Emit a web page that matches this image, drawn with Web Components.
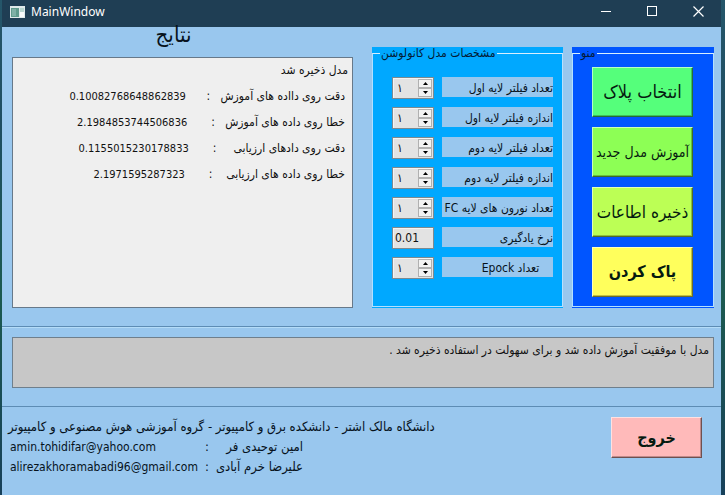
<!DOCTYPE html>
<html lang="fa">
<head>
<meta charset="utf-8">
<title>MainWindow</title>
<style>
html, body { height: 100%; }
body {
  margin: 0;
  font-family: "DejaVu Sans Condensed", "DejaVu Sans", sans-serif;
  font-size: 12px;
  line-height: 20px;
  color: #06121c;
  background: linear-gradient(180deg, #25566a 0, #1f4e62 25%, #1c5a50 60%, #17405a 100%);
}
</style>
</head>
<body>
<main-window></main-window>

<script>
const define = (name, html, setup) => {
  const template = document.createElement('template');
  template.innerHTML = html.trim();
  customElements.define(name, class extends HTMLElement {
    constructor() {
      super();
      this.attachShadow({ mode: 'open' }).append(template.content.cloneNode(true));
    }
    connectedCallback() {
      if (setup) setup(this, this.shadowRoot);
    }
  });
};

define('title-bar', `
<style>
:host { display: flex; align-items: center; height: 27px; padding: 0 8px; background: #1f3e54; color: #fff; direction: ltr; }
.app { width: 15px; height: 12px; margin-bottom: 4px; }
h1 { flex: 1; margin: 0 0 3px 6px; font: 12px/16px "Noto Sans", sans-serif; }
button { width: 46px; height: 22px; margin: 0 0 4px; padding: 0; border: 0; background: none; color: inherit; }
button:last-child { width: 30px; margin-left: 8px; }
button svg { display: block; margin: auto; }
</style>
<svg class="app" viewBox="0 0 15 12"><rect width="15" height="12" fill="#dfe9ea"/><rect x="1" y="2" width="8" height="9" fill="#5f9a8c"/><rect x="2" y="3" width="4" height="7" fill="#7fb0a6"/><rect x="10" y="2" width="4" height="9" fill="#b9d6d0"/><rect x="10" y="6" width="4" height="5" fill="#f7fafa"/></svg>
<h1><slot></slot></h1>
<button aria-label="Minimize"><svg width="11" height="11"><path d="M0 5.500h10" stroke="#fff"/></svg></button>
<button aria-label="Maximize"><svg width="11" height="11"><rect x=".5" y=".5" width="9" height="9" fill="none" stroke="#fff"/></svg></button>
<button aria-label="Close"><svg width="11" height="11"><path d="M.5 .5l10 10M10.500 .5l-10 10" stroke="#fff" stroke-width="1.200"/></svg></button>
`);

define('group-box', `
<style>
:host { display: block; background: var(--fill); border-bottom: 1px solid var(--fill); box-sizing: border-box; }
fieldset { box-sizing: border-box; height: 100%; margin: 0; padding: var(--top) var(--end) 8px var(--start); border: 1px solid #b4e0ff; border-top-color: #d8efff; min-width: 0; }
legend { margin-left: calc(7px - var(--start)); padding: 0 1px; line-height: 13px; color: #041a33; }
.items { display: grid; gap: 10px; }
</style>
<fieldset><legend></legend><div class="items"><slot></slot></div></fieldset>
`, (el, root) => { root.querySelector('legend').textContent = el.getAttribute('heading'); });

define('push-button', `
<style>
:host { display: block; }
button {
  display: block; box-sizing: border-box; width: 100%; height: var(--height, 50px); padding: 0;
  border: 1px solid; border-color: #ffffff90 #00000090 #00000090 #ffffff90;
  box-shadow: inset -1px -1px #00000040; background: var(--fill); color: #061a10;
  font: var(--weight, normal) var(--size, 17px)/24px "DejaVu Sans Condensed", "DejaVu Sans", sans-serif; white-space: nowrap;
}
</style>
<button type="button"><slot></slot></button>
`);

define('param-field', `
<style>
:host { display: flex; gap: 8px; height: 20px; }
.box { display: flex; box-sizing: border-box; flex: none; width: 42px; height: 22px; border: 1px solid #7d8a90; box-shadow: inset 1px 1px #f4f4f4; background: #e3e3e3; padding: 1px; }
input { flex: 1; min-width: 0; width: 0; padding: 0 1px; border: 0; background: none; font: 12px/18px "DejaVu Sans Condensed", "DejaVu Sans", sans-serif; color: #111; }
.spin input { padding-left: 3px; }
.steps { display: none; }
.spin .steps { display: grid; width: 14px; grid-template-rows: 1fr 1fr; }
.steps button { display: grid; place-items: center; padding: 0; border: 1px solid #b0b0b0; background: #f2f2f2; min-height: 0; }
label { flex: 1; min-width: 0; background: #99c7ee; direction: rtl; white-space: pre; line-height: 22px; color: #06121c; }
</style>
<div class="box"><input id="value" type="text"><span class="steps">
<button type="button" aria-label="Increase"><svg width="5" height="3"><path d="M0 3L2.500 0L5 3z"/></svg></button>
<button type="button" aria-label="Decrease"><svg width="5" height="3"><path d="M0 0L2.500 3L5 0z"/></svg></button>
</span></div><label for="value"><slot></slot></label>
`, (el, root) => {
  const input = root.querySelector('input');
  input.value = el.getAttribute('value');
  if (el.hasAttribute('spin')) {
    root.querySelector('.box').classList.add('spin');
    input.inputMode = 'numeric';
  }
});

define('results-panel', `
<style>
:host { display: flex; flex-direction: column; min-width: 0; }
h2 { margin: 0; height: 30px; padding-right: 18px; text-align: center; font-size: 22px; font-weight: normal; line-height: 16px; direction: rtl; }
.log { flex: 1; box-sizing: border-box; border: 1px solid #67798a; background: #efefef; padding: 0 4px; direction: rtl; line-height: 24px; color: #111; }
</style>
<h2>نتایج</h2>
<div class="log" role="log"><slot></slot></div>
`);

define('log-line', `
<style>
:host { display: block; height: 26px; white-space: pre; }
:host([indent]) { padding-right: 3px; }
::slotted(span) { font-size: 11px; }
</style><slot></slot>`);

define('message-box', `
<style>
:host { display: block; padding: 10px 7px 18px 10px; border: solid #5d8cb4; border-width: 1px 0; box-shadow: inset 0 1px #b4dcf8; }
textarea { display: block; box-sizing: border-box; width: 100%; height: 51px; margin: 0; padding: 2px 4px; border: 1px solid #6f7f8c; background: #c7c7c7; resize: none; direction: rtl; font: inherit; color: #111; }
</style>
<textarea readonly aria-label="پیام"></textarea>
`, (el, root) => { root.querySelector('textarea').value = el.getAttribute('text'); });

define('about-footer', `
<style>
:host { display: flex; justify-content: space-between; align-items: flex-start; padding: 10px 19px 0 6px; font-size: 13px; }
p { margin: 0; direction: rtl; white-space: nowrap; }
.people { display: grid; grid-template-columns: 192px 14px 89px; }
.people span { direction: rtl; white-space: nowrap; }
.people i { font-style: normal; text-align: center; }
a { color: inherit; text-decoration: none; padding-left: 2px; font-size: 12px; }
push-button { width: 91px; --height: 41px; --fill: #ffbaba; --weight: bold; --size: 16px; }
</style>
<div>
<p>دانشگاه مالک اشتر - دانشکده برق و کامپیوتر - گروه آموزشی هوش مصنوعی و کامپیوتر</p>
<div class="people">
<a href="mailto:amin.tohidifar@yahoo.com">amin.tohidifar@yahoo.com</a><i>:</i><span>امین توحیدی  فر</span>
<a href="mailto:alirezakhoramabadi96@gmail.com">alirezakhoramabadi96@gmail.com</a><i>:</i><span>علیرضا خرم آبادی</span>
</div>
</div>
<push-button>خروج</push-button>
`);

define('main-window', `
<style>
:host { display: flex; flex-direction: column; min-height: 100vh; box-sizing: border-box; margin: 0 4px 0 2px; background: #99c7ee; }
.top { display: grid; grid-template-columns: minmax(0, 1fr) 210px 151px; padding: 0 7px 18px 10px; min-height: 281px; }
.params { margin: 20px 0 0 19px; --fill: #00a8ff; --start: 19px; --end: 9px; --top: 17px; }
.menu { margin: 20px 0 0 9px; --fill: #0055ff; --start: 19px; --end: 20px; --top: 7px; }
.a { --fill: #55ff7b; --size: 18px; }
.b { --fill: #8dff55; --size: 14px; }
.c { --fill: #bcff55; }
.d { --fill: #ffff5c; --size: 16px; --weight: bold; }
</style>
<title-bar>MainWindow</title-bar>
<div class="top">
<results-panel>
<log-line>مدل ذخیره شد</log-line>
<log-line indent>دقت روی دااده های آموزش   :      <span>0.10082768648862839</span></log-line>
<log-line indent>خطا روی داده های آموزش   :       <span>2.1984853744506836</span></log-line>
<log-line indent>دقت روی دادهای ارزیابی     :       <span>0.1155015230178833</span></log-line>
<log-line indent>خطا روی داده های ارزیابی    :       <span>2.1971595287323</span></log-line>
</results-panel>
<group-box class="params" heading="مشخصات مدل کانولوشن">
<param-field spin value="۱">تعداد فیلتر لایه اول</param-field>
<param-field spin value="۱">اندازه فیلتر لایه اول</param-field>
<param-field spin value="۱">تعداد فیلتر لایه دوم</param-field>
<param-field spin value="۱">اندازه فیلتر لایه دوم</param-field>
<param-field spin value="۱">تعداد نورون های لایه FC</param-field>
<param-field value="0.01">نرخ یادگیری</param-field>
<param-field spin value="۱">&nbsp;&nbsp;&nbsp;&nbsp;تعداد Epock</param-field>
</group-box>
<group-box class="menu" heading="منو">
<push-button class="a">انتخاب پلاک</push-button>
<push-button class="b">آموزش مدل جدید</push-button>
<push-button class="c">ذخیره اطاعات</push-button>
<push-button class="d">پاک کردن</push-button>
</group-box>
</div>
<message-box text="مدل با موفقیت آموزش داده شد و برای سهولت در استفاده ذخیره شد ."></message-box>
<about-footer></about-footer>
`);
</script>
</body>
</html>
